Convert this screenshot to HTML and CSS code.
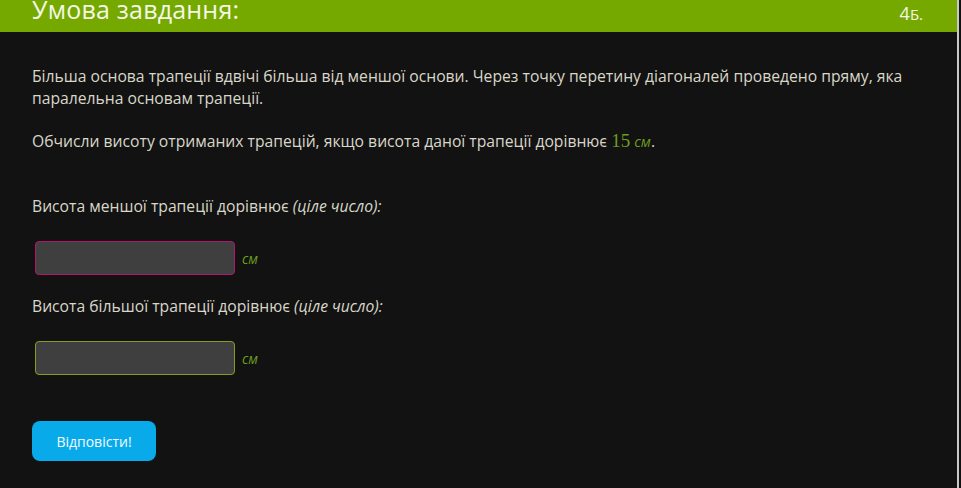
FILE: index.html
```html
<!DOCTYPE html>
<html lang="uk">
<head>
  <meta charset="UTF-8" />
  <meta name="viewport" content="width=device-width, initial-scale=1.0" />
  <title>Умова завдання</title>
  <link rel="stylesheet" href="styles.css">
</head>
<body>
  <div class="task">
    <header class="task-head">
      <h2>Умова завдання:</h2>
      <span class="points"><b>4</b>Б.</span>
    </header>
    <main class="task-body">
      <p>Більша основа трапеції вдвічі більша від меншої основи. Через точку перетину діагоналей проведено пряму, яка паралельна основам трапеції.</p>
      <p>Обчисли висоту отриманих трапецій, якщо висота даної трапеції дорівнює <span class="math"><span class="num">15</span> <i>см</i></span>.</p>

      <div class="answers">
        <div class="question">
          <p>Висота меншої трапеції дорівнює <i>(ціле число):</i></p>
          <div class="field">
            <input type="text" class="answer wrong">
            <i class="unit">см</i>
          </div>
        </div>
        <div class="question">
          <p>Висота більшої трапеції дорівнює <i>(ціле число):</i></p>
          <div class="field">
            <input type="text" class="answer">
            <i class="unit">см</i>
          </div>
        </div>
      </div>

      <button class="submit">Відповісти!</button>
    </main>
  </div>
</body>
</html>
```

FILE: styles.css
```css
* { box-sizing: border-box; }
body {
  margin: 0;
  background: #121212;
  font-family: "Open Sans", Arial, sans-serif;
  color: #d9d7c9;
  height: 488px;
  overflow: hidden;
}
.task {
  width: 959px;
  height: 488px;
  border-right: 2px solid #c8c8c8;
}
.task-head {
  display: flex;
  justify-content: space-between;
  align-items: flex-end;
  height: 32px;
  background: #76a900;
  color: #f4f7e8;
  padding: 0 34px 13px 32px;
}
.task-head h2 {
  margin: 0;
  font-size: 25px;
  font-weight: normal;
  letter-spacing: 0.2px;
  line-height: 20px;
}
.points {
  font-size: 15px;
  line-height: 14px;
  margin-bottom: -2px;
}
.points b {
  font-size: 18px;
  font-weight: normal;
}
.task-body {
  padding: 33px 32px;
  font-size: 15.7px;
  line-height: 22px;
}
.task-body p {
  margin: 0 0 21px;
}
.math {
  color: #6e9d20;
}
.math .num {
  font-family: "Liberation Serif", "Times New Roman", serif;
  font-size: 19px;
}
.math i {
  font-size: 14.5px;
}
.answers {
  margin-top: 42px;
}
.question {
  margin-bottom: 20px;
}
.question p {
  margin: 0 0 24px;
}
.field {
  display: flex;
  align-items: center;
  gap: 7px;
  padding-left: 3px;
}
.answer {
  width: 200px;
  height: 34px;
  background: #3f3f3f;
  border: 1px solid #8a9a1e;
  border-radius: 4px;
  color: #eee;
  font: inherit;
}
.answer.wrong {
  border-color: #b3176b;
}
.unit {
  color: #6e9d20;
  font-size: 14px;
  margin-top: 2px;
}
.submit {
  margin-top: 26px;
  width: 124px;
  height: 40px;
  border: none;
  border-radius: 8px;
  background: #09aaea;
  color: #f2fbff;
  font-family: "Open Sans", Arial, sans-serif;
  font-size: 14px;
}
```
